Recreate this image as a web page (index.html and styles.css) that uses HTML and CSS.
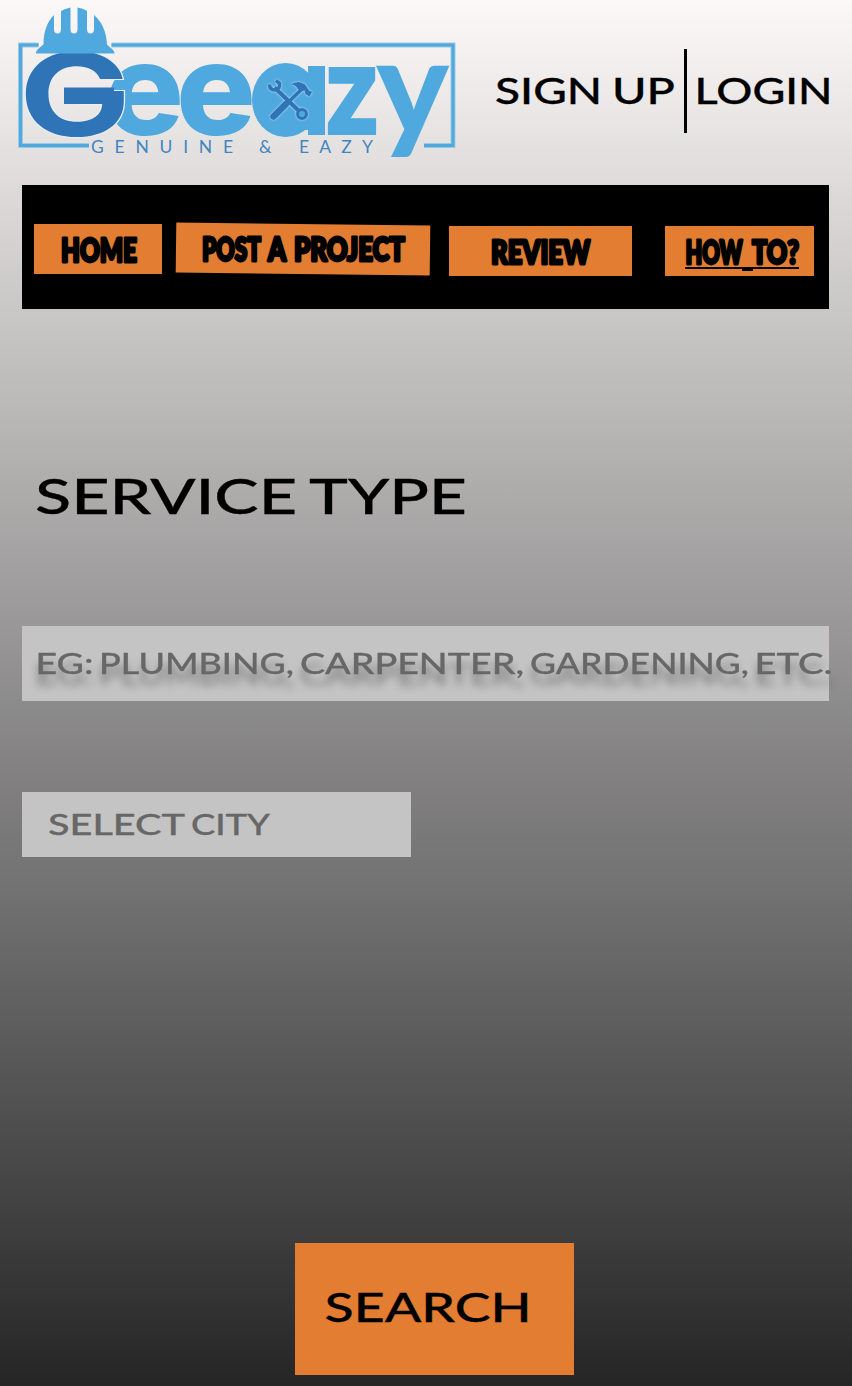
FILE: index.html
```html
<!DOCTYPE html>
<html lang="en">
<head>
<meta charset="utf-8">
<title>Geeazy</title>
<link rel="stylesheet" href="styles.css">
</head>
<body>
<div class="page">
  <header class="header">
    <svg class="logo" width="460" height="170" viewBox="0 0 460 170" role="img" aria-label="Geeazy">
      <path class="frame-edge" d="M38.500 45H20.500V145.500H89M111.500 45H453V145.500H424"/>
      <path class="frame" d="M38.500 45H20.500V145.500H89M111.500 45H453V145.500H424"/>
      <g class="sky">
        <text class="round" x="105" y="135" font-size="129" textLength="79" lengthAdjust="spacingAndGlyphs">e</text>
        <text class="round" x="176" y="135" font-size="129" textLength="80" lengthAdjust="spacingAndGlyphs">e</text>
        <ellipse cx="285.500" cy="100" rx="33.500" ry="37"/>
        <text class="round" x="262" y="130" font-size="96" textLength="56" lengthAdjust="spacingAndGlyphs">a</text>
        <rect x="308" y="66" width="17" height="69"/>
        <text class="round" x="322" y="135" font-size="125" textLength="60" lengthAdjust="spacingAndGlyphs">z</text>
        <text class="tail" x="376" y="135" font-size="134" textLength="73" lengthAdjust="spacingAndGlyphs">y</text>
      </g>
      <text class="big-g" x="19" y="135.500" font-size="115" textLength="112" lengthAdjust="spacingAndGlyphs">G</text>
      <rect x="64" y="87.500" width="50" height="16.500" fill="#2f74b7"/>
      <path class="hat" d="M36 53.500c0-4 3-5 7.500-9C43.500 32 47 22 54 15v14q0 4.500 3.500 4.500T61 29V11q4-2.500 9.500-3.500V29q0 4.500 3.500 4.500T77.500 29V7.500Q83 8 87 11v18q0 4.500 3.500 4.500T94 29V15c8 7 12.500 17 13 29.500 3.500 4 7.500 5 7.500 9z"/>
      <g class="tool-halo">
        <path d="M304 87 274 116" fill="none" stroke="#2f74b7" stroke-width="3.500"/>
        <path d="M286 104 273.500 116.500" fill="none" stroke="#2f74b7" stroke-width="6.500" stroke-linecap="round"/>
        <path d="M274.500 87.500 299 111" fill="none" stroke="#2f74b7" stroke-width="4"/>
        <path d="M269.500 84.500q0 5.500 5.500 5.500 5.500-1 4.500-6.500l-3.500-3" fill="none" stroke="#2f74b7" stroke-width="3.500"/>
        <path d="M291 84.500q7-5 14 0l4 6 3 1.500-2.500 4.500-4-2.500-1-3.500-4 1-3-3q-2-4-6.500-4z" fill="#2f74b7"/>
        <circle cx="302" cy="114" r="4.500" fill="#50a9de" stroke="#2f74b7" stroke-width="3"/>
      </g>
      <g class="tagline">
        <text x="91" y="153" textLength="142">GENUINE</text>
        <text x="259" y="153">&amp;</text>
        <text x="299" y="153" textLength="74">EAZY</text>
      </g>
    </svg>
    <div class="account">
      <svg class="wide" width="180" height="60" viewBox="494 64 180 60"><text x="495" y="104" font-size="36" textLength="107" lengthAdjust="spacingAndGlyphs">SIGN</text><text x="612" y="104" font-size="36" textLength="63" lengthAdjust="spacingAndGlyphs">UP</text></svg>
      <span class="divider"></span>
      <svg class="wide" width="140" height="60" viewBox="694 64 140 60"><text x="694.500" y="104" font-size="36" textLength="138" lengthAdjust="spacingAndGlyphs">LOGIN</text></svg>
    </div>
  </header>

  <nav class="nav">
    <a class="tab home"><svg width="128" height="50"><text x="27" y="37.500" textLength="76" lengthAdjust="spacingAndGlyphs">HOME</text></svg></a>
    <a class="tab post"><svg width="254" height="50">
      <text x="26" y="37" textLength="59" lengthAdjust="spacingAndGlyphs">POST</text>
      <text x="92" y="37" textLength="18" lengthAdjust="spacingAndGlyphs">A</text>
      <text x="118" y="37" textLength="111" lengthAdjust="spacingAndGlyphs">PROJECT</text>
    </svg></a>
    <a class="tab review"><svg width="183" height="50"><text x="42" y="38" textLength="99" lengthAdjust="spacingAndGlyphs">REVIEW</text></svg></a>
    <a class="tab howto"><svg width="149" height="50">
      <text x="20.500" y="38" textLength="57" lengthAdjust="spacingAndGlyphs">HOW</text>
      <text x="87" y="38" textLength="47" lengthAdjust="spacingAndGlyphs">TO?</text>
      <path d="M20 42H134" stroke="#000" stroke-width="2"/><path d="M77 43.500H88" stroke="#000" stroke-width="3"/>
    </svg></a>
  </nav>

  <main class="main">
    <h1 class="title"><svg class="wide" width="440" height="60"><text x="13" y="52" font-size="48" textLength="262" lengthAdjust="spacingAndGlyphs">SERVICE</text><text x="287" y="52" font-size="48" textLength="158" lengthAdjust="spacingAndGlyphs">TYPE</text></svg></h1>
    <div class="field service"><svg class="wide" width="807" height="75">
      <g font-size="28.500">
        <text x="13.500" y="48" textLength="58" lengthAdjust="spacingAndGlyphs">EG:</text>
        <text x="77" y="48" textLength="195" lengthAdjust="spacingAndGlyphs">PLUMBING,</text>
        <text x="278" y="48" textLength="224" lengthAdjust="spacingAndGlyphs">CARPENTER,</text>
        <text x="508" y="48" textLength="219" lengthAdjust="spacingAndGlyphs">GARDENING,</text>
        <text x="732.500" y="48" textLength="78" lengthAdjust="spacingAndGlyphs">ETC.</text>
      </g>
    </svg></div>
    <div class="field city"><svg class="wide" width="389" height="65"><text x="26" y="43" font-size="28.500" textLength="137" lengthAdjust="spacingAndGlyphs">SELECT</text><text x="169" y="43" font-size="28.500" textLength="79" lengthAdjust="spacingAndGlyphs">CITY</text></svg></div>
    <button class="search"><svg class="wide" width="279" height="132"><text x="29.500" y="79" font-size="40.500" textLength="207" lengthAdjust="spacingAndGlyphs">SEARCH</text></svg></button>
  </main>
</div>
</body>
</html>
```
FILE: styles.css
```css
* { box-sizing: border-box; }
body { margin: 0; }
svg { display: block; overflow: visible; }

.page {
  width: 852px;
  height: 1386px;
  overflow: hidden;
  font-family: Lato, "Open Sans", sans-serif;
  background: linear-gradient(#fcf8f7 0, #e5e3e2 140px, #dedad9 185px, #c9c8c7 309px, #b1b0ae 465px, #a8a6a6 530px, #9b9899 620px, #8c8b8b 705px, #807e7e 790px, #747474 875px, #3e3e3e 1230px, #252525 1386px);
}

.header { display: flex; height: 185px; }
.logo { flex: none; }
.frame { fill: none; stroke: #50a9de; stroke-width: 3; }
.frame-edge { fill: none; stroke: #9dc9e2; stroke-width: 5; }
.sky, .hat { fill: #50a9de; }
.round { font-family: Inter, sans-serif; font-weight: 800; }
.tail { font-family: Lato, sans-serif; font-weight: 900; }
.big-g {
  font-family: Inter, sans-serif;
  font-weight: 700;
  fill: #2f74b7;
  stroke: #e8eef3;
  stroke-width: 2;
  paint-order: stroke;
}
.tool-halo { filter: drop-shadow(0 0 1px #d5e9f5); }
.tagline { font-size: 17.5px; fill: #4385bf; }

.account { display: flex; align-items: flex-start; padding: 49px 0 0 34px; }
.account svg { margin-top: 15px; }
.divider { width: 3px; height: 84px; margin: 0 7px 0 10px; background: #000; }
.wide text { font-weight: 500; stroke: currentColor; stroke-width: .3px; fill: currentColor; }

.nav {
  display: flex;
  align-items: flex-start;
  width: 807px;
  height: 124px;
  margin-left: 22px;
  padding: 39px 0 0 12px;
  background: #000;
}
.tab { height: 50px; background: #e27d31; }
.tab text {
  font-size: 31.5px;
  font-weight: 800;
  stroke: #000;
  stroke-width: 2.8px;
  stroke-linejoin: round;
}
.post { margin: -.5px 19px 0 14px; transform: rotate(.7deg); }
.post svg { transform: rotate(-.7deg); }
.review { margin: 2px 33px 0 0; }
.howto { margin-top: 2px; }

.main { padding: 153px 0 0 22px; }
.title { height: 60px; margin: 0 0 104px; }
.field { background: #c4c4c4; color: #676767; }
.service { width: 807px; height: 75px; }
.service g { filter: drop-shadow(0 11px 4px rgba(0, 0, 0, .35)); }
.city { width: 389px; height: 65px; margin-top: 91px; }
.search {
  display: block;
  width: 279px;
  height: 132px;
  margin: 386px 0 0 273px;
  padding: 0;
  border: 0;
  background: #e27d31;
  color: #000;
  font-family: inherit;
}
```
